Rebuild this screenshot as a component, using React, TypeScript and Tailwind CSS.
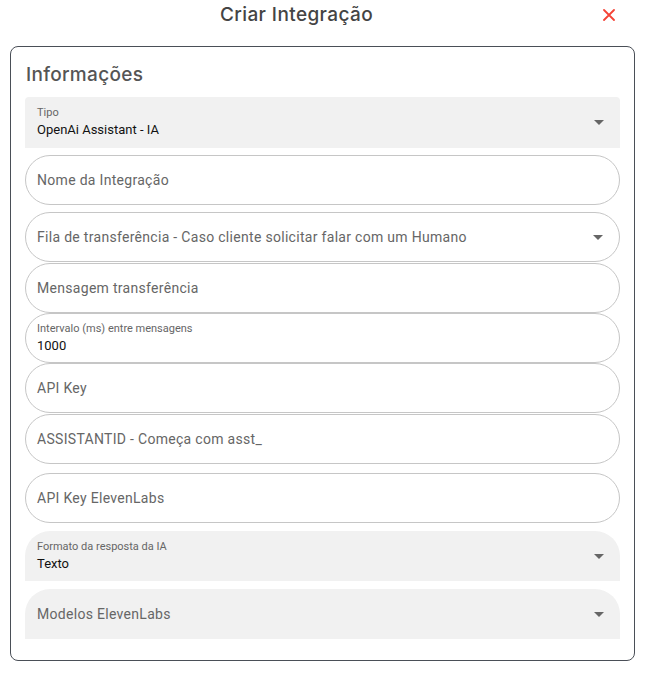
import React from 'react';

const Caret: React.FC = () => (
    <svg width="10" height="5" viewBox="0 0 10 5" className="shrink-0">
        <path d="M0 0 L10 0 L5 5 Z" fill="#666666" />
    </svg>
);

type OutlinedProps = { placeholder?: string; label?: string; value?: string; select?: boolean; className?: string };

const Outlined: React.FC<OutlinedProps> = ({ placeholder, label, value, select, className }) => (
    <div className={`h-[50px] rounded-[25px] border border-[#c6c6c6] pl-[11px] pr-[16px] flex items-center ${className ?? ''}`}>
        <div className="flex-1 min-w-0">
            {label ? (
                <div className="flex flex-col">
                    <span className="text-[11px] leading-[14px] text-[#666]">{label}</span>
                    <span className="text-[13px] leading-[18px] mt-[1px] text-[#111]">{value}</span>
                </div>
            ) : (
                <span className="text-[14px] tracking-[0.3px] text-[#666]">{placeholder}</span>
            )}
        </div>
        {select && <Caret />}
    </div>
);

type FilledProps = { placeholder?: string; label?: string; value?: string; className?: string; rounded: string };

const Filled: React.FC<FilledProps> = ({ placeholder, label, value, className, rounded }) => (
    <div className={`bg-[#f1f1f1] pl-[12px] pr-[16px] flex items-center ${rounded} ${className ?? ''}`}>
        <div className="flex-1 min-w-0">
            {label ? (
                <div className="flex flex-col">
                    <span className="text-[11px] leading-[14px] text-[#666]">{label}</span>
                    <span className="text-[13px] leading-[18px] mt-[1px] text-[#111]">{value}</span>
                </div>
            ) : (
                <span className="text-[14px] tracking-[0.3px] text-[#666]">{placeholder}</span>
            )}
        </div>
        <Caret />
    </div>
);

const App: React.FC = () => {
    return (
        <div className="w-[651px] h-[688px] bg-white" style={{ fontFamily: 'Roboto, "Noto Sans", sans-serif' }}>
            <div className="h-[30px] flex items-center">
                <h1 className="flex-1 text-center text-[19px] tracking-[0.4px] text-[#444] font-medium" style={{ fontFamily: 'Inter, sans-serif' }}>
                    Criar Integração
                </h1>
                <button className="w-[32px] mr-[26px] flex items-center justify-center">
                    <svg width="12" height="12" viewBox="0 0 12 12">
                        <path d="M1 1 L11 11 M11 1 L1 11" stroke="#f44336" strokeWidth="1.8" strokeLinecap="round" />
                    </svg>
                </button>
            </div>
            <div className="ml-[10px] mt-[16px] w-[625px] border border-[#4a4f57] rounded-[8px] px-[14px] pt-[16px] pb-[21px]">
                <h2 className="ml-[1px] text-[19px] leading-[24px] tracking-[0.3px] text-[#555] font-medium" style={{ fontFamily: 'Inter, sans-serif' }}>
                    Informações
                </h2>
                <div className="flex flex-col">
                    <Filled rounded="rounded-t-[4px]" className="h-[51px] mt-[10px]" label="Tipo" value="OpenAi Assistant - IA" />
                    <Outlined className="mt-[7px]" placeholder="Nome da Integração" />
                    <Outlined className="mt-[7px]" placeholder="Fila de transferência - Caso cliente solicitar falar com um Humano" select />
                    <Outlined className="mt-[1px]" placeholder="Mensagem transferência" />
                    <Outlined label="Intervalo (ms) entre mensagens" value="1000" />
                    <Outlined placeholder="API Key" />
                    <Outlined className="mt-[1px]" placeholder="ASSISTANTID - Começa com asst_" />
                    <Outlined className="mt-[9px]" placeholder="API Key ElevenLabs" />
                    <Filled rounded="rounded-t-[25px]" className="h-[50px] mt-[8px]" label="Formato da resposta da IA" value="Texto" />
                    <Filled rounded="rounded-t-[25px]" className="h-[50px] mt-[8px]" placeholder="Modelos ElevenLabs" />
                </div>
            </div>
        </div>
    );
};

export default App;
